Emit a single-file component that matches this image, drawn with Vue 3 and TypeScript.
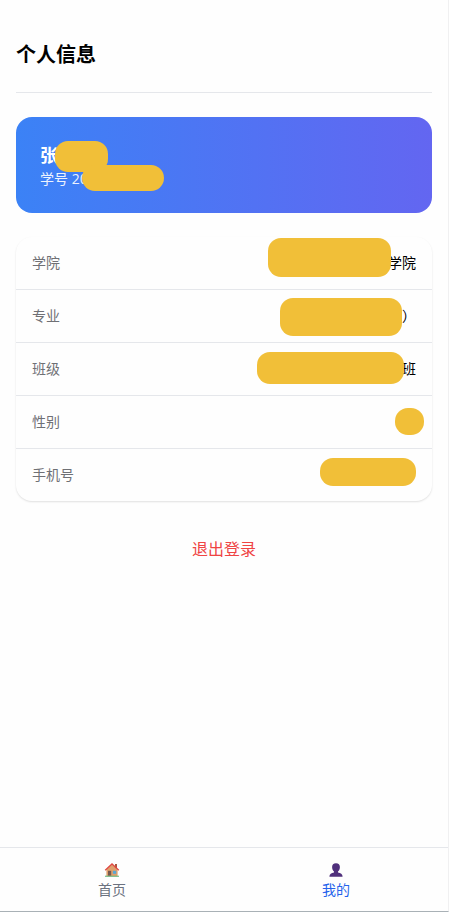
<script setup lang="ts">
interface Mask {
  left: number
  top: number
  width: number
  height: number
}

interface InfoRow {
  label: string
  value: string
  mask: Mask
}

// Mask offsets are measured from the top left corner of the row.
const rows: InfoRow[] = [
  { label: '学院', value: '学院', mask: { left: 252, top: 1, width: 123, height: 39 } },
  { label: '专业', value: '）', mask: { left: 264, top: 8, width: 122, height: 38 } },
  { label: '班级', value: '班', mask: { left: 241, top: 9, width: 147, height: 32 } },
  { label: '性别', value: '', mask: { left: 379, top: 12, width: 29, height: 27 } },
  { label: '手机号', value: '', mask: { left: 304, top: 9, width: 96, height: 28 } },
]

const nameMask: Mask = { left: 39, top: 24, width: 53, height: 31 }
const idMask: Mask = { left: 66, top: 48, width: 82, height: 26 }

function box(m: Mask) {
  return {
    left: `${m.left}px`,
    top: `${m.top}px`,
    width: `${m.width}px`,
    height: `${m.height}px`,
  }
}
</script>

<template>
  <div class="page">
    <main class="content">
      <header class="header">
        <h1 class="title">个人信息</h1>
      </header>

      <section class="profile">
        <div class="name">张</div>
        <div class="student-id">学号 20</div>
        <span class="mask" :style="box(nameMask)"></span>
        <span class="mask" :style="box(idMask)"></span>
      </section>

      <section class="list">
        <div v-for="row in rows" :key="row.label" class="row">
          <span class="label">{{ row.label }}</span>
          <span class="value">{{ row.value }}</span>
          <span class="mask" :style="box(row.mask)"></span>
        </div>
      </section>

      <button class="logout" type="button">退出登录</button>
    </main>

    <nav class="tabbar">
      <a class="tab">
        <svg class="icon" viewBox="0 0 16 16" aria-hidden="true">
          <path d="M11 2h2v4h-2z" fill="#a9573f" />
          <path d="M2.4 7.6 8 2.4l5.6 5.2v6.6H2.4z" fill="#dfa06c" />
          <path d="M4 8.800h3.200v5H4z" fill="#76584f" />
          <path d="M8.900 8.800h3.300v3H8.900z" fill="#58a6d6" />
          <path d="M1.200 8.200 8 2l6.800 6.200" fill="none" stroke="#df4842" stroke-width="1.300" />
          <path d="M1 13.700h14v1.100H1z" fill="#68b77f" />
        </svg>
        <span>首页</span>
      </a>
      <a class="tab active">
        <svg class="icon" viewBox="0 0 16 16" aria-hidden="true">
          <path
            d="M8 1.200c2.600 0 3.900 1.600 3.900 3.900 0 2-.8 3.600-1.900 4.400v1c2.600.5 4.600 1.500 4.600 4.200H1.400c0-2.700 2-3.700 4.600-4.200v-1C4.900 8.700 4.100 7.100 4.100 5.100 4.100 2.800 5.400 1.200 8 1.200z"
            fill="#50307c"
          />
        </svg>
        <span>我的</span>
      </a>
    </nav>
  </div>
</template>

<style>
body {
  background: #fff;
}
</style>

<style scoped>
.page {
  box-sizing: border-box;
  display: flex;
  flex-direction: column;
  height: 912px;
  border-right: 1px solid #f0f0f1;
  border-bottom: 1px solid #a9b1b6;
  background: #fefefe;
  color: #000;
  font-family: 'Noto Sans CJK SC', sans-serif;
  font-size: 14px;
  line-height: 20px;
}

.content {
  flex: 1;
  display: flex;
  flex-direction: column;
  padding: 16px 16px 0;
}

.header {
  padding: 24px 0;
  border-bottom: 1px solid #e5e7eb;
}

.title {
  margin: 0;
  font-size: 20px;
  line-height: 28px;
  font-weight: 700;
}

.profile {
  position: relative;
  box-sizing: border-box;
  height: 96px;
  margin-top: 24px;
  padding: 23px 24px;
  border-radius: 16px;
  background: linear-gradient(to right, #3b82f6, #6366f1);
  color: #fff;
}

.name {
  font-size: 18px;
  line-height: 28px;
  font-weight: 700;
}

.student-id {
  margin-top: 1px;
  font-family: 'Open Sans', 'Noto Sans CJK SC', sans-serif;
  opacity: 0.9;
}

.list {
  margin-top: 24px;
  border-radius: 16px;
  background: #fefefe;
  box-shadow: 0 1px 2px rgba(0, 0, 0, 0.12);
}

.row {
  position: relative;
  display: flex;
  justify-content: space-between;
  padding: 15px 16px 17px;
  border-bottom: 1px solid #e5e7eb;
}

.row:last-child {
  border-bottom: 0;
}

.label {
  color: #6f7075;
}

.mask {
  position: absolute;
  border-radius: 13px;
  background: #f1bf38;
}

.logout {
  align-self: center;
  margin-top: 35px;
  padding: 0;
  border: 0;
  background: none;
  color: #ef4444;
  font: inherit;
  font-size: 16px;
  line-height: 24px;
}

.tabbar {
  display: flex;
  box-sizing: border-box;
  height: 64px;
  border-top: 1px solid #e5e7eb;
}

.tab {
  flex: 1;
  display: flex;
  flex-direction: column;
  align-items: center;
  padding-top: 14px;
  color: #6b7280;
}

.icon {
  width: 16px;
  height: 16px;
  margin-bottom: 1px;
}

.tab.active {
  color: #2563eb;
}
</style>
